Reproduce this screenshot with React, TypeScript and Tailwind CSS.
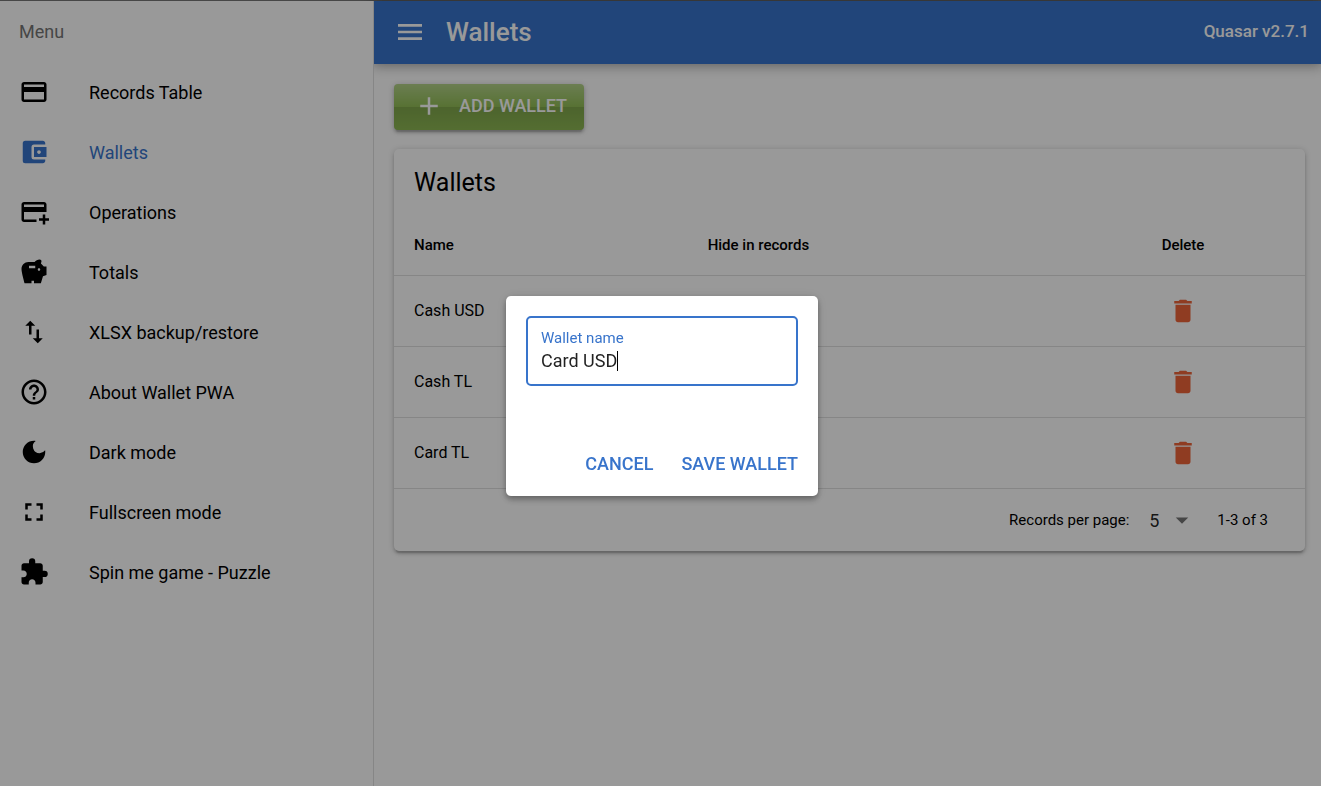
import type { ReactNode } from "react";
import type { IconType } from "react-icons";
import {
  MdAccountBalanceWallet,
  MdAdd,
  MdArrowDropDown,
  MdDarkMode,
  MdDelete,
  MdExtension,
  MdFullscreen,
  MdHelpOutline,
  MdImportExport,
  MdMenu,
  MdOutlineAddCard,
  MdPayment,
  MdSavings,
} from "react-icons/md";

type MenuItem = { label: string; icon: IconType; active?: boolean };

const menuItems: MenuItem[] = [
  { label: "Records Table", icon: MdPayment },
  { label: "Wallets", icon: MdAccountBalanceWallet, active: true },
  { label: "Operations", icon: MdOutlineAddCard },
  { label: "Totals", icon: MdSavings },
  { label: "XLSX backup/restore", icon: MdImportExport },
  { label: "About Wallet PWA", icon: MdHelpOutline },
  { label: "Dark mode", icon: MdDarkMode },
  { label: "Fullscreen mode", icon: MdFullscreen },
  { label: "Spin me game - Puzzle", icon: MdExtension },
];

const wallets = ["Cash USD", "Cash TL", "Card TL"];

function Drawer() {
  return (
    <aside className="relative z-10 w-[374px] shrink-0 border-r border-black/12 bg-white">
      <h2 className="flex h-[61px] items-center pl-[19px] text-[18px] text-[#757575]">Menu</h2>
      <nav className="flex flex-col">
        {menuItems.map(({ label, icon: Icon, active }) => (
          <a
            key={label}
            href="#"
            className={`flex h-[60px] items-center gap-10 pl-[19px] text-[18px] ${
              active ? "text-[#3874cb]" : "text-black"
            }`}
          >
            <Icon className="size-[30px] shrink-0" />
            <span>{label}</span>
          </a>
        ))}
      </nav>
    </aside>
  );
}

function TopBar() {
  return (
    <header className="flex h-[63px] items-center bg-[#3874cb] pr-3 pb-px pl-[20px] text-white shadow-[0_0_12px_2px_rgba(0,0,0,0.2),0_0_12px_rgba(0,0,0,0.24)]">
      <button type="button" aria-label="Menu" className="flex w-8 items-center justify-center">
        <MdMenu className="size-8" />
      </button>
      <h1 className="flex-1 pl-5 text-[26px] font-medium">Wallets</h1>
      <div className="text-[17px] font-medium">Quasar v2.7.1</div>
    </header>
  );
}

function WalletTable() {
  return (
    <section className="rounded-[5px] bg-white shadow-[0_1px_6px_rgba(0,0,0,0.2),0_3px_3px_rgba(0,0,0,0.14),0_4px_1px_-2px_rgba(0,0,0,0.12)]">
      <h2 className="flex h-[66px] items-center px-5 pt-0.5 text-[25px]">Wallets</h2>
      <table className="w-full table-fixed border-collapse text-left">
        <thead>
          <tr className="h-[60px] border-b border-black/12 text-[15px]">
            <th className="w-1/3 pl-5 font-medium">Name</th>
            <th className="pl-[10px] font-medium">Hide in records</th>
            <th className="w-[234px] pr-5 pl-[10px] text-center font-medium">Delete</th>
          </tr>
        </thead>
        <tbody>
          {wallets.map((name) => (
            <tr key={name} className="h-[71px] border-b border-black/12 text-[16px]">
              <td className="pl-5">{name}</td>
              <td />
              <td className="pr-5 pl-[10px]">
                <button type="button" aria-label={`Delete ${name}`} className="mx-auto block text-[#ee643a]">
                  <MdDelete className="size-[30px]" />
                </button>
              </td>
            </tr>
          ))}
        </tbody>
      </table>
      <footer className="flex h-[62px] items-center justify-end pt-px pr-[37px] text-[15px]">
        <label htmlFor="per-page">Records per page:</label>
        <div className="relative ml-5 flex items-center">
          <select id="per-page" defaultValue="5" className="w-12 appearance-none bg-transparent text-[18px] text-black/87">
            <option>5</option>
            <option>10</option>
          </select>
          <MdArrowDropDown className="pointer-events-none absolute right-0 size-[30px] text-black/54" />
        </div>
        <span className="ml-5">1-3 of 3</span>
      </footer>
    </section>
  );
}

function DialogButton({ children }: { children: ReactNode }) {
  return (
    <button type="button" className="text-[18px] font-medium text-[#3874cb] uppercase">
      {children}
    </button>
  );
}

function WalletDialog() {
  return (
    <div className="fixed inset-0 z-20 flex items-center justify-center bg-black/40 pt-1.5 pl-[3px]">
      <div
        role="dialog"
        aria-label="Edit wallet"
        className="flex w-[312px] flex-col rounded-[5px] bg-white px-5 pt-5 pb-[19px] shadow-[0_2px_5px_rgba(0,0,0,0.2),0_5px_6px_rgba(0,0,0,0.14),0_1px_12px_rgba(0,0,0,0.12)]"
      >
        <div className="flex h-[70px] flex-col rounded-[5px] border-2 border-[#3874cb] px-[13px] pt-[10px]">
          <label htmlFor="wallet-name" className="text-[15px] leading-5 text-[#3874cb]">
            Wallet name
          </label>
          <div className="flex h-[26px] items-center">
            <input
              id="wallet-name"
              defaultValue="Card USD"
              className="[field-sizing:content] text-[18px] leading-6 text-black/87 caret-transparent outline-none"
            />
            <span className="h-5 w-px bg-black" />
          </div>
        </div>
        <div className="mt-16 flex justify-end gap-7">
          <DialogButton>Cancel</DialogButton>
          <DialogButton>Save wallet</DialogButton>
        </div>
      </div>
    </div>
  );
}

export default function App() {
  return (
    <div className="flex min-h-screen border-t border-[#777777] bg-white font-['Roboto',sans-serif] text-black">
      <Drawer />
      <div className="flex min-w-0 flex-1 flex-col">
        <TopBar />
        <main className="flex flex-col gap-[19px] py-5 pr-4 pl-5">
          <button
            type="button"
            className="flex h-[46px] items-center gap-[15px] self-start rounded-[4px] bg-[#92be56] bg-[linear-gradient(to_bottom,rgba(255,255,255,0.3),rgba(255,255,255,0)_50%,rgba(0,0,0,0.12)_51%,rgba(0,0,0,0.04))] pr-[17px] pb-[3px] pl-5 text-[18px] font-medium text-white uppercase shadow-[0_1px_6px_rgba(0,0,0,0.2),0_3px_3px_rgba(0,0,0,0.14),0_4px_1px_-2px_rgba(0,0,0,0.12)]"
          >
            <MdAdd className="size-[30px]" />
            Add wallet
          </button>
          <WalletTable />
        </main>
      </div>
      <WalletDialog />
    </div>
  );
}
